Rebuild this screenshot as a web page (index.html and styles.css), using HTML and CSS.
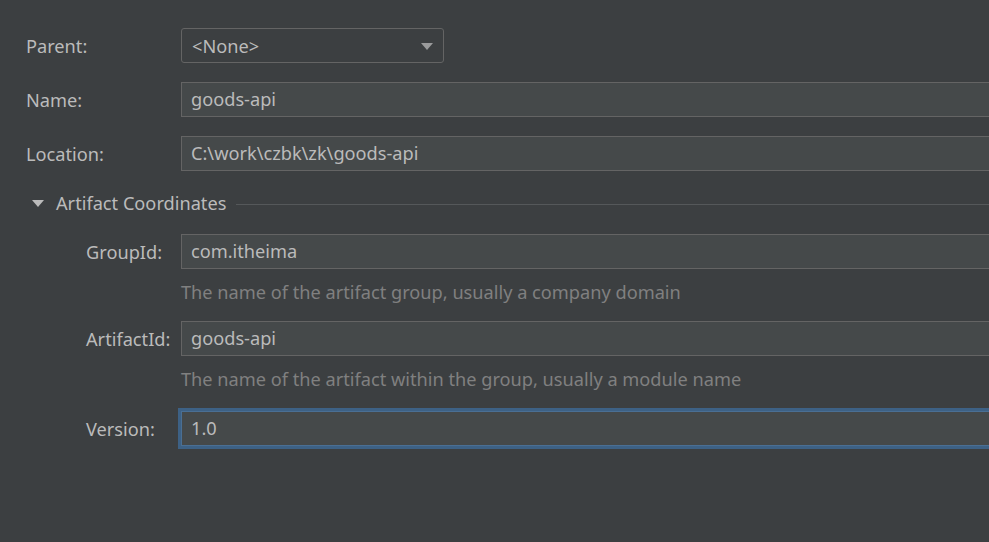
FILE: index.html
```html
<!DOCTYPE html>
<html>
<head>
<meta charset="utf-8">
<link rel="stylesheet" href="styles.css">
</head>
<body>
<div class="form">
  <div class="label">Parent:</div>
  <div class="field"><div class="combo"><span>&lt;None&gt;</span><span class="arrow"></span></div></div>

  <div class="label">Name:</div>
  <div class="field"><div class="input">goods-api</div></div>

  <div class="label">Location:</div>
  <div class="field"><div class="input">C:\work\czbk\zk\goods-api</div></div>

  <div class="section">
    <span class="tri"></span>
    <span class="section-title">Artifact Coordinates</span>
    <span class="rule"></span>
  </div>

  <div class="label indent">GroupId:</div>
  <div class="field">
    <div class="input">com.itheima</div>
    <div class="hint">The name of the artifact group, usually a company domain</div>
  </div>

  <div class="label indent">ArtifactId:</div>
  <div class="field">
    <div class="input">goods-api</div>
    <div class="hint">The name of the artifact within the group, usually a module name</div>
  </div>

  <div class="label indent last">Version:</div>
  <div class="field last"><div class="input focus">1.0</div></div>
</div>
</body>
</html>
```

FILE: styles.css
```css
html, body {
  margin: 0;
  padding: 0;
  background: #3c3f41;
  overflow: hidden;
  width: 989px;
  height: 542px;
}
body {
  font-family: "Noto Sans", "Open Sans", "Liberation Sans", sans-serif;
  font-size: 18.2px;
  color: #bbbbbb;
}
.form {
  display: grid;
  grid-template-columns: 155px 840px;
  row-gap: 19px;
  padding: 28px 0 0 26px;
}
.label {
  height: 35px;
  line-height: 36px;
  white-space: nowrap;
}
.label.indent {
  padding-left: 60px;
}
.last {
  margin-top: 3px;
}
.field {
  display: flex;
  flex-direction: column;
  gap: 13px;
}
.input {
  box-sizing: border-box;
  height: 35px;
  background: #45494a;
  border: 1px solid #646464;
  padding: 0 9px;
  line-height: 33px;
  color: #bbbbbb;
  white-space: nowrap;
}
.input.focus {
  border: 1px solid #4a6f94;
  box-shadow: 0 0 0 3px #3d6185;
}
.combo {
  box-sizing: border-box;
  width: 263px;
  height: 35px;
  border: 1px solid #646464;
  border-radius: 3px;
  background: #3c3f41;
  padding: 1px 10px 0 10px;
  line-height: 33px;
  display: flex;
  justify-content: space-between;
  align-items: center;
}
.arrow {
  width: 0;
  height: 0;
  border-left: 6.5px solid transparent;
  border-right: 6.5px solid transparent;
  border-top: 7px solid #9a9b9c;
}
.hint {
  line-height: 20px;
  color: #808080;
  white-space: nowrap;
}
.section {
  grid-column: 1 / 3;
  display: flex;
  align-items: center;
  height: 24px;
  margin-top: 1px;
}
.tri {
  width: 0;
  height: 0;
  margin-left: 6px;
  border-left: 6.5px solid transparent;
  border-right: 6.5px solid transparent;
  border-top: 7px solid #bbbbbb;
}
.section-title {
  margin-left: 12px;
}
.rule {
  flex: 1;
  height: 1px;
  background: #55585a;
  margin-left: 10px;
  margin-top: 2px;
}
```
